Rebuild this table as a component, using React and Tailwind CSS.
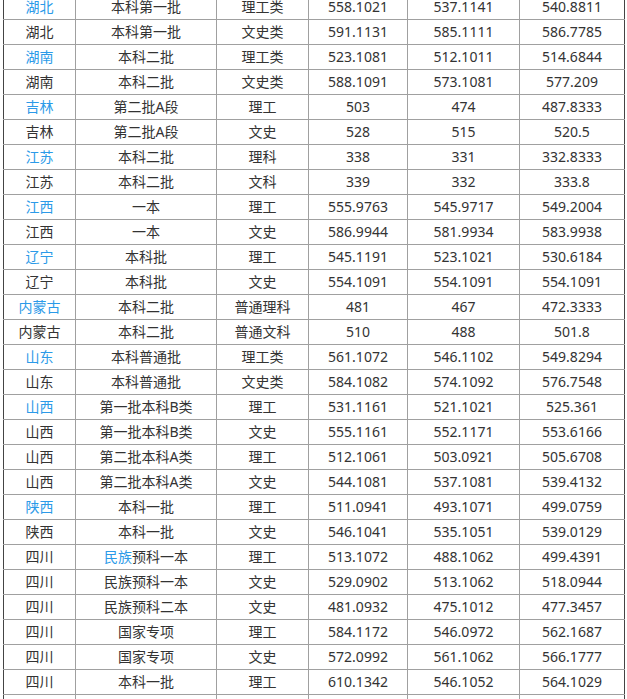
const rows = [
  ["湖北", true, "本科第一批", "理工类", "558.1021", "537.1141", "540.8811"],
  ["湖北", false, "本科第一批", "文史类", "591.1131", "585.1111", "586.7785"],
  ["湖南", true, "本科二批", "理工类", "523.1081", "512.1011", "514.6844"],
  ["湖南", false, "本科二批", "文史类", "588.1091", "573.1081", "577.209"],
  ["吉林", true, "第二批A段", "理工", "503", "474", "487.8333"],
  ["吉林", false, "第二批A段", "文史", "528", "515", "520.5"],
  ["江苏", true, "本科二批", "理科", "338", "331", "332.8333"],
  ["江苏", false, "本科二批", "文科", "339", "332", "333.8"],
  ["江西", true, "一本", "理工", "555.9763", "545.9717", "549.2004"],
  ["江西", false, "一本", "文史", "586.9944", "581.9934", "583.9938"],
  ["辽宁", true, "本科批", "理工", "545.1191", "523.1021", "530.6184"],
  ["辽宁", false, "本科批", "文史", "554.1091", "554.1091", "554.1091"],
  ["内蒙古", true, "本科二批", "普通理科", "481", "467", "472.3333"],
  ["内蒙古", false, "本科二批", "普通文科", "510", "488", "501.8"],
  ["山东", true, "本科普通批", "理工类", "561.1072", "546.1102", "549.8294"],
  ["山东", false, "本科普通批", "文史类", "584.1082", "574.1092", "576.7548"],
  ["山西", true, "第一批本科B类", "理工", "531.1161", "521.1021", "525.361"],
  ["山西", false, "第一批本科B类", "文史", "555.1161", "552.1171", "553.6166"],
  ["山西", false, "第二批本科A类", "理工", "512.1061", "503.0921", "505.6708"],
  ["山西", false, "第二批本科A类", "文史", "544.1081", "537.1081", "539.4132"],
  ["陕西", true, "本科一批", "理工", "511.0941", "493.1071", "499.0759"],
  ["陕西", false, "本科一批", "文史", "546.1041", "535.1051", "539.0129"],
  ["四川", false, "民族预科一本", "理工", "513.1072", "488.1062", "499.4391", true],
  ["四川", false, "民族预科一本", "文史", "529.0902", "513.1062", "518.0944"],
  ["四川", false, "民族预科二本", "文史", "481.0932", "475.1012", "477.3457"],
  ["四川", false, "国家专项", "理工", "584.1172", "546.0972", "562.1687"],
  ["四川", false, "国家专项", "文史", "572.0992", "561.1062", "566.1777"],
  ["四川", false, "本科一批", "理工", "610.1342", "546.1052", "564.1029"],
  ["四川", false, "本科一批", "文史", "", "", ""],
];

const cell = "border border-[#a0a0a0] h-[25px] p-0 text-center align-middle";

export default function App() {
  return (
    <div
      className="w-[627px] h-[699px] overflow-hidden bg-white pl-[3px]"
      style={{ fontFamily: '"Noto Sans", "Noto Sans CJK SC", sans-serif' }}
    >
      <table className="-mt-[6px] border-collapse table-fixed w-[621px] text-[14px] leading-[18px] text-[#333] border-x border-x-[#444]">
        <colgroup>
          <col className="w-[72px]" />
          <col className="w-[141px]" />
          <col className="w-[92px]" />
          <col className="w-[99px]" />
          <col className="w-[112px]" />
          <col className="w-[105px]" />
        </colgroup>
        <tbody>
          {rows.map((r, i) => (
            <tr key={i}>
              <td className={`${cell} border-l-[#444] ${r[1] ? "text-[#2b9ae8]" : ""}`}>{r[0]}</td>
              <td className={cell}>
                {r[7] ? (
                  <>
                    <span className="text-[#2b9ae8]">民族</span>
                    {r[2].slice(2)}
                  </>
                ) : (
                  r[2]
                )}
              </td>
              <td className={cell}>{r[3]}</td>
              <td className={cell}>{r[4]}</td>
              <td className={cell}>{r[5]}</td>
              <td className={`${cell} border-r-[#444]`}>{r[6]}</td>
            </tr>
          ))}
        </tbody>
      </table>
    </div>
  );
}
